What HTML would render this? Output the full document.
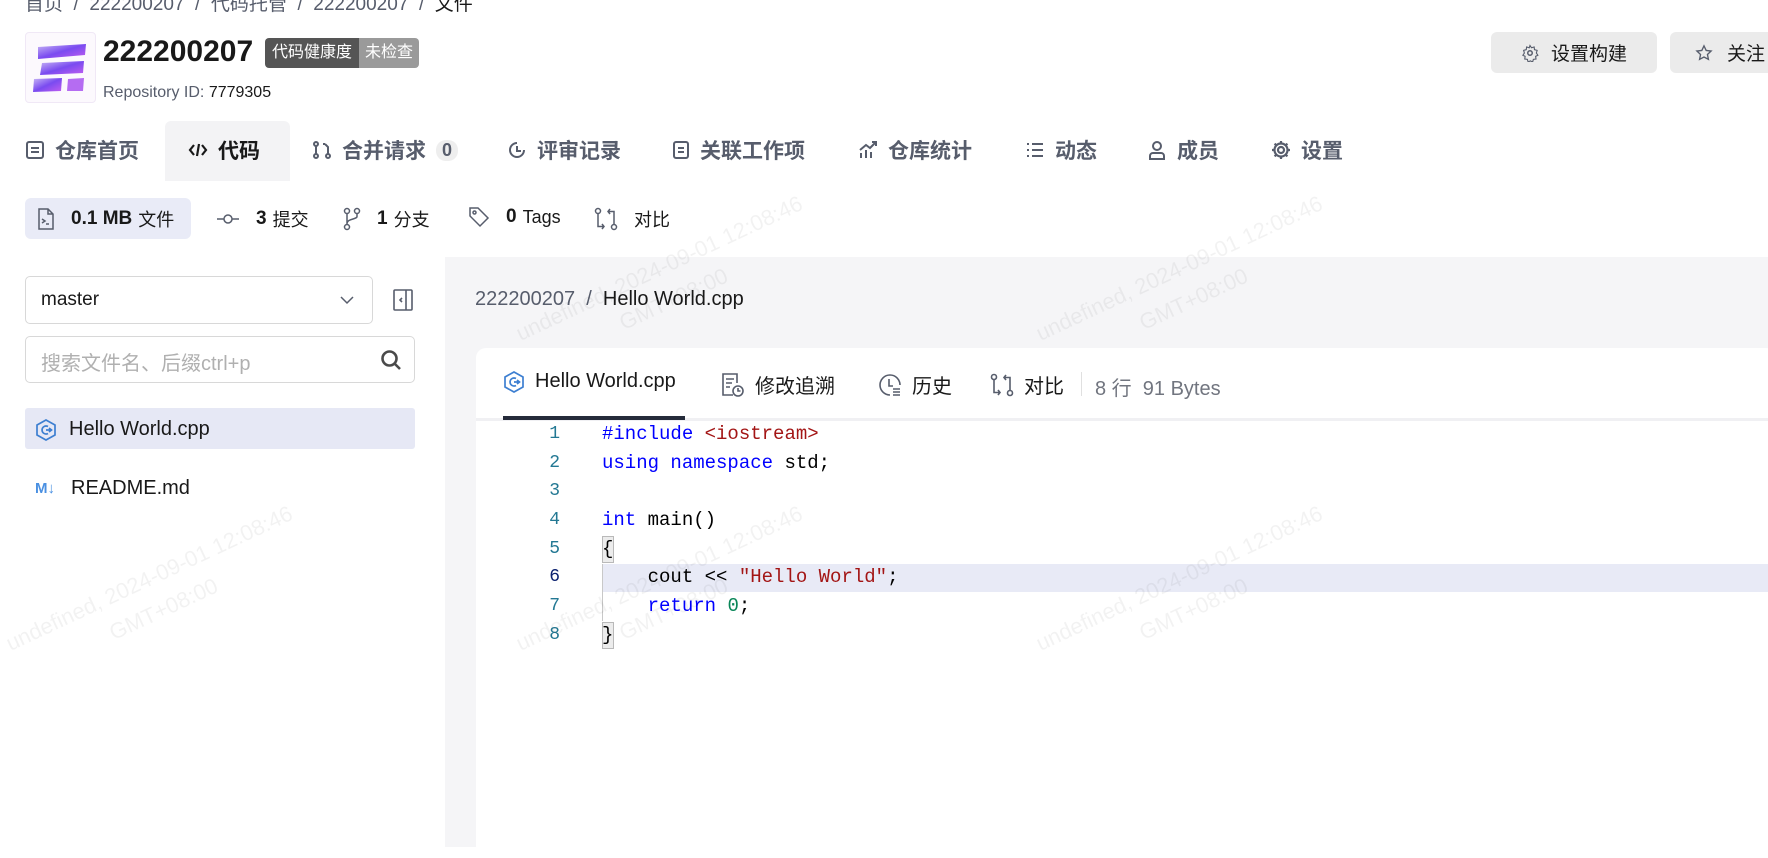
<!DOCTYPE html>
<html><head><meta charset="utf-8"><style>
*{margin:0;padding:0;box-sizing:border-box}
body{width:1768px;height:847px;overflow:hidden;background:#fff;font-family:"Liberation Sans","Noto Sans CJK SC",sans-serif;color:#191919;position:relative}
.a{position:absolute;white-space:nowrap}
svg{display:block}
.tab{position:absolute;top:135px;font-size:21px;font-weight:bold;color:#575d6c;display:flex;align-items:center;gap:10px}
.sub{position:absolute;top:206px;font-size:18px;display:flex;align-items:center;gap:6px;color:#191919}
.sub b{font-weight:bold;font-size:19px}
.ct{position:absolute;top:370px;font-size:20px;display:flex;align-items:center;gap:10px;color:#191919}
.ln{position:absolute;left:520px;width:40px;text-align:right;font-family:"Liberation Mono",monospace;font-size:18px;color:#237893}
.cd{position:absolute;left:602px;font-family:"Liberation Mono",monospace;font-size:19px;color:#000;white-space:pre}
.k{color:#0000ff}.s{color:#a31515}.n{color:#098658}
.wm{position:absolute;color:rgba(0,0,0,0.05);font-size:22px;transform:rotate(-25deg);white-space:nowrap;text-align:center;line-height:34px}
</style></head><body>

<div class="a" style="left:25px;top:-11px;font-size:19px;color:#575d6c">首页 &nbsp;/&nbsp; 222200207 &nbsp;/&nbsp; 代码托管 &nbsp;/&nbsp; 222200207 &nbsp;/&nbsp; <span style="color:#191919">文件</span></div>

<div class="a" style="left:25px;top:32px;width:71px;height:71px;border:1px solid #f0e8f6;border-radius:4px;background:#fcf9fd">
<svg width="71" height="71" viewBox="0 0 71 71">
<defs><linearGradient id="g" x1="0" y1="0" x2="1" y2="1"><stop offset="0" stop-color="#c9b8f5"/><stop offset="0.5" stop-color="#7a4bf0"/><stop offset="1" stop-color="#c25ef0"/></linearGradient></defs>
<polygon points="12,14 60,11 59,22 12,26" fill="url(#g)"/>
<polygon points="16,30 58,28 57,40 14,42" fill="url(#g)"/>
<polygon points="8,46 36,45 35,58 7,59" fill="url(#g)"/>
<polygon points="42,46 58,45 57,58 41,58" fill="#b56cf2"/>
</svg></div>
<div class="a" style="left:103px;top:35px;font-size:30px;font-weight:bold">222200207</div>
<div class="a" style="left:265px;top:38px;height:30px;border-radius:4px;overflow:hidden;display:flex;font-size:16px;color:#fff;line-height:30px">
<span style="background:#555;padding:0 7px">代码健康度</span><span style="background:#9a9a9a;padding:0 6px">未检查</span></div>
<div class="a" style="left:103px;top:84px;font-size:16px;color:#575d6c">Repository ID: <span style="color:#191919">7779305</span></div>

<div class="a" style="left:1491px;top:32px;width:166px;height:41px;background:#ebebeb;border-radius:6px;font-size:19px;display:flex;align-items:center;justify-content:center;gap:12px">
<svg width="18" height="18" viewBox="0 0 24 24" fill="none" stroke="#575d6c" stroke-width="2"><circle cx="12" cy="12" r="3"/><path d="M12 2l2 3 3.5-1 .5 3.5 3.5 1-1 3.5 2 3-3 1.5.5 3.5-3.5.5-1 3.5-3-1.5-3 1.5-1-3.5-3.5-.5.5-3.5-3-1.5 2-3-1-3.5 3.5-1 .5-3.5 3.5 1z" stroke-width="1.5"/></svg>设置构建</div>
<div class="a" style="left:1670px;top:32px;width:120px;height:41px;background:#ebebeb;border-radius:6px;font-size:19px;display:flex;align-items:center;padding-left:25px;gap:14px">
<svg width="18" height="18" viewBox="0 0 24 24" fill="none" stroke="#575d6c" stroke-width="1.8"><path d="M12 2.5l2.9 6.1 6.6.8-4.9 4.6 1.3 6.5L12 17.3l-5.9 3.2 1.3-6.5L2.5 9.4l6.6-.8z"/></svg>关注</div>

<div class="a" style="left:165px;top:121px;width:125px;height:60px;background:#f3f3f5;border-radius:6px 6px 0 0"></div>
<div class="tab" style="left:25px"><svg width="20" height="20" viewBox="0 0 20 20" fill="none" stroke="#575d6c" stroke-width="2"><rect x="2" y="2" width="16" height="16" rx="2"/><path d="M6 8h8M6 12h8"/></svg>仓库首页</div>
<div class="tab" style="left:188px;color:#191919"><svg width="20" height="20" viewBox="0 0 20 20" fill="none" stroke="#191919" stroke-width="2.2"><path d="M6 5l-4 5 4 5M14 5l4 5-4 5M11 4l-2 12"/></svg>代码</div>
<div class="tab" style="left:312px"><svg width="20" height="20" viewBox="0 0 20 20" fill="none" stroke="#575d6c" stroke-width="2"><circle cx="4" cy="4" r="2"/><circle cx="4" cy="16" r="2"/><circle cx="16" cy="16" r="2"/><path d="M4 6v8M16 14V7l-3-3M13 4h-2"/></svg>合并请求<span style="background:#eee;border-radius:10px;padding:0 6px;font-size:18px">0</span></div>
<div class="tab" style="left:507px"><svg width="20" height="20" viewBox="0 0 20 20" fill="none" stroke="#575d6c" stroke-width="2"><path d="M17 10a7 7 0 1 1-7-7"/><path d="M10 6v5h4"/></svg>评审记录</div>
<div class="tab" style="left:672px"><svg width="18" height="20" viewBox="0 0 18 20" fill="none" stroke="#575d6c" stroke-width="2"><rect x="2" y="2" width="14" height="16" rx="2"/><path d="M6 8h6M6 12h6"/></svg>关联工作项</div>
<div class="tab" style="left:858px"><svg width="20" height="20" viewBox="0 0 20 20" fill="none" stroke="#575d6c" stroke-width="2"><path d="M3 18v-5M8 18v-8M13 18v-6M2 10l6-5 4 3 6-6M14 2h4v4"/></svg>仓库统计</div>
<div class="tab" style="left:1025px"><svg width="20" height="20" viewBox="0 0 20 20" fill="none" stroke="#575d6c" stroke-width="2"><path d="M2 4h2M7 4h11M2 10h2M7 10h11M2 16h2M7 16h11"/></svg>动态</div>
<div class="tab" style="left:1147px"><svg width="20" height="20" viewBox="0 0 20 20" fill="none" stroke="#575d6c" stroke-width="2"><circle cx="10" cy="6" r="4"/><path d="M3 19v-3a3 3 0 0 1 3-3h8a3 3 0 0 1 3 3v3z"/></svg>成员</div>
<div class="tab" style="left:1271px"><svg width="20" height="20" viewBox="0 0 20 20" fill="none" stroke="#575d6c" stroke-width="2.2"><circle cx="10" cy="10" r="3"/><circle cx="10" cy="10" r="6.5"/><path d="M10 1v2.5M10 16.5V19M1 10h2.5M16.5 10H19M3.6 3.6l1.8 1.8M14.6 14.6l1.8 1.8M3.6 16.4l1.8-1.8M14.6 5.4l1.8-1.8"/></svg>设置</div>

<div class="a" style="left:25px;top:198px;width:166px;height:41px;background:#e9ebf7;border-radius:6px"></div>
<div class="sub" style="left:37px"><svg width="18" height="22" viewBox="0 0 18 22" fill="none" stroke="#575d6c" stroke-width="1.5"><path d="M2 1h9l5 5v15H2z M11 1v5h5"/><path d="M5 11l3 2-3 2M9 16h3"/></svg><span style="width:4px"></span><b>0.1 MB</b>文件</div>
<div class="sub" style="left:216px"><svg width="24" height="14" viewBox="0 0 24 14" fill="none" stroke="#575d6c" stroke-width="1.5"><circle cx="12" cy="7" r="4"/><path d="M1 7h7M16 7h7"/></svg><span style="width:4px"></span><b>3</b>提交</div>
<div class="sub" style="left:343px"><svg width="18" height="24" viewBox="0 0 18 24" fill="none" stroke="#575d6c" stroke-width="1.5"><circle cx="4" cy="4" r="2.5"/><circle cx="14" cy="4" r="2.5"/><circle cx="4" cy="20" r="2.5"/><path d="M4 6.5v11M14 6.5v3c0 3-10 2-10 7"/></svg><span style="width:4px"></span><b>1</b>分支</div>
<div class="sub" style="left:468px"><svg width="22" height="22" viewBox="0 0 22 22" fill="none" stroke="#575d6c" stroke-width="1.5"><path d="M2 2h8l10 10-8 8L2 10z"/><circle cx="6.5" cy="6.5" r="1.5"/></svg><span style="width:4px"></span><b>0</b>Tags</div>
<div class="sub" style="left:594px"><svg width="24" height="24" viewBox="0 0 24 24" fill="none" stroke="#575d6c" stroke-width="1.5"><circle cx="4" cy="4" r="2.5"/><circle cx="20" cy="20" r="2.5"/><path d="M4 6.5v13h6M8 17l2 2.5-2 2.5M20 17.5v-13h-6M16 7l-2-2.5 2-2.5"/></svg><span style="width:4px"></span>对比</div>

<div class="a" style="left:25px;top:276px;width:348px;height:48px;border:1px solid #d8d8d8;border-radius:5px;font-size:19px;padding:12px 15px">master
<svg style="position:absolute;right:18px;top:19px" width="14" height="9" viewBox="0 0 14 9" fill="none" stroke="#575d6c" stroke-width="1.5"><path d="M1 1l6 6 6-6"/></svg></div>
<svg class="a" style="left:393px;top:289px" width="20" height="22" viewBox="0 0 20 22" fill="none" stroke="#575d6c" stroke-width="1.6"><rect x="1" y="1" width="18" height="20" rx="1"/><path d="M13 1v20M9 9l-2 2 2 2"/></svg>
<div class="a" style="left:25px;top:336px;width:390px;height:47px;border:1px solid #d8d8d8;border-radius:5px;font-size:20px;color:#b0b0b0;padding:10px 15px">搜索文件名、后缀ctrl+p
<svg style="position:absolute;right:12px;top:12px" width="22" height="22" viewBox="0 0 22 22" fill="none" stroke="#4a4a4a" stroke-width="2.6"><circle cx="9.5" cy="9.5" r="7"/><path d="M15 15l5 5"/></svg></div>
<div class="a" style="left:25px;top:408px;width:390px;height:41px;background:#e6e8f5;border-radius:3px"></div>
<div class="a" style="left:35px;top:418px;display:flex;align-items:center;gap:12px;font-size:20px">
<svg width="22" height="22" viewBox="0 0 22 22" fill="none" stroke="#3d7fd1" stroke-width="1.7"><path d="M11 1l9 5v10l-9 5-9-5V6z"/><path d="M13 7.5a4 4 0 1 0 0 7"/><path d="M11 11h6M14 9l2.5 2-2.5 2"/></svg>Hello World.cpp</div>
<div class="a" style="left:35px;top:477px;display:flex;align-items:center;gap:12px;font-size:20px">
<span style="color:#4a90e2;font-weight:bold;font-size:15px;width:24px">M↓</span>README.md</div>

<div class="a" style="left:445px;top:257px;width:1323px;height:590px;background:#f5f5f7"></div>
<div class="a" style="left:475px;top:288px;font-size:20px;color:#575d6c">222200207 &nbsp;/&nbsp; <span style="color:#191919">Hello World.cpp</span></div>
<div class="a" style="left:476px;top:348px;width:1300px;height:510px;background:#fff;border-radius:10px"></div>
<div class="a" style="left:476px;top:418px;width:1292px;height:3px;background:#f0f0f3"></div>
<div class="a" style="left:503px;top:416px;width:182px;height:4px;background:#252b3a"></div>
<div class="ct" style="left:503px"><svg width="22" height="22" viewBox="0 0 22 22" fill="none" stroke="#3d7fd1" stroke-width="1.7"><path d="M11 1l9 5v10l-9 5-9-5V6z"/><path d="M13 7.5a4 4 0 1 0 0 7"/><path d="M11 11h6M14 9l2.5 2-2.5 2"/></svg>Hello World.cpp</div>
<div class="ct" style="left:721px"><svg width="24" height="26" viewBox="0 0 24 26" fill="none" stroke="#575d6c" stroke-width="1.6"><path d="M12 23H2V2h14v9"/><path d="M5 7h8M5 11h6M5 15h4"/><circle cx="17" cy="19" r="5"/><path d="M17 16v3h2.5"/></svg>修改追溯</div>
<div class="ct" style="left:878px"><svg width="24" height="24" viewBox="0 0 24 24" fill="none" stroke="#575d6c" stroke-width="1.6"><path d="M12 22a10 10 0 1 1 10-10"/><path d="M11 6v7h4M15 16h7M15 19h7M15 22h7"/></svg>历史</div>
<div class="ct" style="left:990px"><svg width="24" height="26" viewBox="0 0 24 24" fill="none" stroke="#575d6c" stroke-width="1.6"><circle cx="4" cy="4" r="2.5"/><circle cx="20" cy="20" r="2.5"/><path d="M4 6.5v13h6M8 17l2 2.5-2 2.5M20 17.5v-13h-6M16 7l-2-2.5 2-2.5"/></svg>对比</div>
<div class="a" style="left:1081px;top:372px;width:1px;height:24px;background:#e0e0e0"></div>
<div class="a" style="left:1095px;top:372px;font-size:20px;color:#71757f">8 行 &nbsp;91 Bytes</div>

<div class="a" style="left:602px;top:564px;width:1166px;height:28px;background:#e8eaf6"></div>
<div class="a" style="left:602px;top:564px;width:1px;height:57px;background:#c8c8c8"></div>
<div class="a" style="left:602px;top:536px;width:12px;height:27px;border:1px solid #b9b9b9;background:#ececec"></div>
<div class="a" style="left:602px;top:622px;width:12px;height:27px;border:1px solid #b9b9b9;background:#ececec"></div>
<div class="ln" style="top:424px">1</div><div class="ln" style="top:453px">2</div><div class="ln" style="top:481px">3</div><div class="ln" style="top:510px">4</div><div class="ln" style="top:539px">5</div><div class="ln" style="top:567px;color:#0b216f">6</div><div class="ln" style="top:596px">7</div><div class="ln" style="top:625px">8</div>
<div class="cd" style="top:423px"><span class="k">#include</span> <span class="s">&lt;iostream&gt;</span></div>
<div class="cd" style="top:452px"><span class="k">using</span> <span class="k">namespace</span> std;</div>
<div class="cd" style="top:509px"><span class="k">int</span> main()</div>
<div class="cd" style="top:538px">{</div>
<div class="cd" style="top:566px">    cout &lt;&lt; <span class="s">"Hello World"</span>;</div>
<div class="cd" style="top:595px">    <span class="k">return</span> <span class="n">0</span>;</div>
<div class="cd" style="top:624px">}</div>

<div class="wm" style="left:0px;top:560px">undefined, 2024-09-01 12:08:46<br>GMT+08:00</div>
<div class="wm" style="left:510px;top:250px">undefined, 2024-09-01 12:08:46<br>GMT+08:00</div>
<div class="wm" style="left:510px;top:560px">undefined, 2024-09-01 12:08:46<br>GMT+08:00</div>
<div class="wm" style="left:1030px;top:250px">undefined, 2024-09-01 12:08:46<br>GMT+08:00</div>
<div class="wm" style="left:1030px;top:560px">undefined, 2024-09-01 12:08:46<br>GMT+08:00</div>
</body></html>
